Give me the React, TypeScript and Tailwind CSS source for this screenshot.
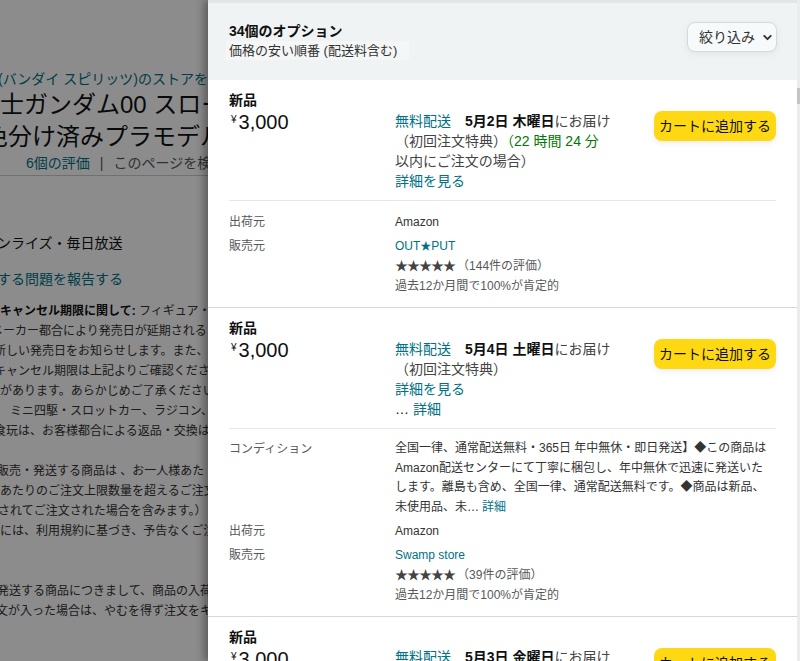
import { ChevronDown } from "lucide-react";
import { ReactNode } from "react";

const link = "text-[#007185]";

interface OfferProps {
  date: string;
  day: string;
  lines: ReactNode[];
  condition?: string[];
  seller: ReactNode;
  ratings: string;
}

function Offer({ date, day, lines, condition, seller, ratings }: OfferProps) {
  return (
    <div className="border-b border-[#d5d9d9] px-[21px] pt-[10px] pb-[11px]">
      <div className="flex">
        <div className="w-[166px] shrink-0">
          <div className="text-[14px] leading-[20px] font-bold text-[#0f1111]">新品</div>
          <div className="flex items-start text-[#0f1111] ml-[2px]">
            <span className="text-[10px] leading-[10px] mt-[5px] mr-[2px]">¥</span>
            <span className="text-[20px] leading-[24px]">3,000</span>
          </div>
        </div>
        <div className="flex-1 mt-[21px] text-[14px] leading-[20px] text-[#444] whitespace-nowrap">
          <div>
            <span className={link}>無料配送</span>
            <span className="ml-[14px] font-bold text-[#0f1111]">{date} {day}</span>
            <span>にお届け</span>
          </div>
          {lines.map((l, i) => (
            <div key={i}>{l}</div>
          ))}
        </div>
        <div className="mt-[21px] shrink-0">
          <button className="h-[30px] w-[122px] rounded-[8px] bg-[#ffd814] text-[14px] text-[#0f1111] whitespace-nowrap shadow-[0_2px_5px_rgba(213,217,217,0.5)]">
            カートに追加する
          </button>
        </div>
      </div>
      <div
        className={`mt-[9px] border-t border-[#e7e7e7] text-[12px] leading-[20px] ${
          condition ? "pt-[10px]" : "pt-[11px]"
        }`}
      >
        {condition && (
          <div className="flex mb-[4px]">
            <div className="w-[166px] shrink-0 text-[#565959]">コンディション</div>
            <div className="text-[#333] whitespace-nowrap leading-[19.5px]">
              {condition.map((c, i) => (
                <div key={i}>
                  {c}
                  {i === condition.length - 1 && <span className={`${link} ml-[3px]`}>詳細</span>}
                </div>
              ))}
            </div>
          </div>
        )}
        <div className="flex mb-[4px]">
          <div className="w-[166px] shrink-0 text-[#565959]">出荷元</div>
          <div className="text-[#333]">Amazon</div>
        </div>
        <div className="flex">
          <div className="w-[166px] shrink-0 text-[#565959]">販売元</div>
          <div>
            <div className={link}>{seller}</div>
            <div className="text-[#565959]">
              <span className="text-[#444] text-[13px] tracking-[-1px]">★★★★★</span>
              <span className="ml-[2px]">（{ratings}件の評価）</span>
            </div>
            <div className="text-[#565959]">過去12か月間で100%が肯定的</div>
          </div>
        </div>
      </div>
    </div>
  );
}

function Offer3() {
  return (
    <div className="px-[21px] pt-[10px]">
      <div className="flex">
        <div className="w-[166px] shrink-0">
          <div className="text-[14px] leading-[20px] font-bold text-[#0f1111]">新品</div>
          <div className="flex items-start text-[#0f1111] ml-[2px]">
            <span className="text-[10px] leading-[10px] mt-[5px] mr-[2px]">¥</span>
            <span className="text-[20px] leading-[24px]">3,000</span>
          </div>
        </div>
        <div className="flex-1 mt-[20px] text-[14px] leading-[20px] text-[#444] whitespace-nowrap">
          <span className={link}>無料配送</span>
          <span className="ml-[14px] font-bold text-[#0f1111]">5月3日 金曜日</span>
          <span>にお届け</span>
        </div>
        <div className="mt-[21px] shrink-0">
          <button className="h-[30px] w-[122px] rounded-[8px] bg-[#ffd814] text-[14px] text-[#0f1111] whitespace-nowrap">
            カートに追加する
          </button>
        </div>
      </div>
    </div>
  );
}

const para: [string, number][] = [
  ["メーカー都合により発売日が延期される", -9],
  ["新しい発売日をお知らせします。また、", -6],
  ["キャンセル期限は上記よりご確認ください", -6],
  ["があります。あらかじめご了承ください", 0],
  ["　ミニ四駆・スロットカー、ラジコン、", -2],
  ["食玩は、お客様都合による返品・交換は", -6],
  ["", 0],
  ["販売・発送する商品は 、お一人様あた", -3],
  ["あたりのご注文上限数量を超えるご注文", 0],
  ["されてご注文された場合を含みます。）", -2],
  ["には、利用規約に基づき、予告なくご注", 0],
  ["", 0],
  ["", 0],
  ["発送する商品につきまして、商品の入荷", -3],
  ["文が入った場合は、やむを得ず注文をキ", -4],
];

export default function App() {
  return (
    <div className="relative w-[800px] h-[661px] overflow-hidden bg-white font-['Liberation_Sans','Noto_Sans_CJK_JP',sans-serif] text-[#0f1111]">
      {/* page behind the drawer */}
      <div className="pt-[70px] whitespace-nowrap">
        <div className={`${link} text-[14px] leading-[19px] -ml-[2px]`}>(バンダイ スピリッツ)のストアを表示</div>
        <div className="text-[24px] leading-[32px]">士ガンダム00 スローネアイン</div>
        <div className="text-[24px] leading-[32px] -ml-[16px]">色分け済みプラモデル</div>
        <div className="text-[14px] leading-[20px] pl-[26px] text-[#565959]">
          <span className={link}>6個の評価</span>
          <span className="mx-[10px]">|</span>
          <span>このページを検索</span>
        </div>
        <div className="mt-[2px] border-t border-[#ccc] w-[600px]" />
        <div className="mt-[57px] text-[14px] leading-[20px] -ml-[3px]">ンライズ・毎日放送</div>
        <div className={`${link} mt-[16px] text-[14px] leading-[20px] -ml-[3px]`}>する問題を報告する</div>
        <div className="mt-[12px] text-[12px] leading-[20px] text-[#333]">
          <div>
            <span className="font-bold text-[#0f1111]">キャンセル期限に関して:</span> フィギュア・プラモデル
          </div>
          {para.map(([t, m], i) => (
            <div key={i} className="h-[20px]" style={{ marginLeft: m }}>
              {t}
            </div>
          ))}
        </div>
      </div>

      {/* dim overlay */}
      <div className="absolute inset-0 bg-black/45" />

      {/* drawer */}
      <div className="absolute right-0 top-0 h-full w-[592px] flex bg-white shadow-[-4px_0_8px_rgba(0,0,0,0.35)]">
        <div className="flex-1 overflow-hidden">
          <div className="h-[3px] bg-[#e3e6e6]" />
          <div className="h-[77px] bg-[#f0f3f3] flex justify-between pl-[21px] pr-[20px]">
            <div className="pt-[18px]">
              <div className="text-[14px] leading-[20px] font-bold">34個のオプション</div>
              <div className="text-[13px] leading-[19px] text-[#333] bg-[#f5f7f7] -ml-[3px] pl-[3px] pr-[12px]">
                価格の安い順番 (配送料含む)
              </div>
            </div>
            <div className="pt-[19px]">
              <button className="flex items-center whitespace-nowrap h-[30px] w-[90px] pl-[11px] gap-[6px] rounded-[8px] border border-[#d5d9d9] bg-[#f7fafa] text-[14px] text-[#333] shadow-[0_2px_5px_rgba(213,217,217,0.5)]">
                絞り込み
                <ChevronDown size={13} strokeWidth={3.5} className="shrink-0" />
              </button>
            </div>
          </div>
          <Offer
            date="5月2日"
            day="木曜日"
            lines={[
              <>
                （初回注文特典）<span className="text-[#007600]">（22 時間 24 分</span>
              </>,
              "以内にご注文の場合）",
              <span className={link}>詳細を見る</span>,
            ]}
            seller={<>OUT<span className="text-[11px]">★</span>PUT</>}
            ratings="144"
          />
          <Offer
            date="5月4日"
            day="土曜日"
            lines={[
              "（初回注文特典）",
              <span className={link}>詳細を見る</span>,
              <>
                <span className="text-[#0f1111]">… </span>
                <span className={link}>詳細</span>
              </>,
            ]}
            condition={[
              "全国一律、通常配送無料・365日 年中無休・即日発送】◆この商品は",
              "Amazon配送センターにて丁寧に梱包し、年中無休で迅速に発送いた",
              "します。離島も含め、全国一律、通常配送無料です。◆商品は新品、",
              "未使用品、未…",
            ]}
            seller="Swamp store"
            ratings="39"
          />
          <Offer3 />
        </div>
        <div className="w-[3px] bg-[#ececec] pt-[88px]">
          <div className="h-[16px] bg-[#c4c4c4]" />
        </div>
      </div>
    </div>
  );
}
